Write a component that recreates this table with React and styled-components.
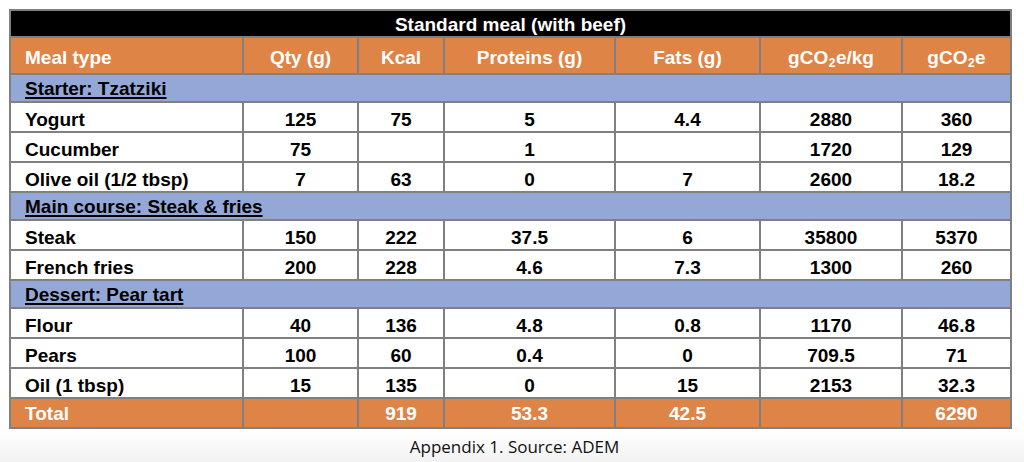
import React from 'react'
import styled, { createGlobalStyle } from 'styled-components'

const GlobalStyle = createGlobalStyle`
  html, body {
    margin: 0;
    padding: 0;
  }
  body {
    width: 1024px;
    height: 462px;
    overflow: hidden;
    background: linear-gradient(to bottom, #ffffff 0, #ffffff 430px, #f2f2f2 462px);
    font-family: "Liberation Sans", Arial, sans-serif;
  }
`

const sections = [
  {
    title: 'Starter: Tzatziki',
    rows: [
      ['Yogurt', '125', '75', '5', '4.4', '2880', '360'],
      ['Cucumber', '75', '', '1', '', '1720', '129'],
      ['Olive oil (1/2 tbsp)', '7', '63', '0', '7', '2600', '18.2'],
    ],
  },
  {
    title: 'Main course: Steak & fries',
    rows: [
      ['Steak', '150', '222', '37.5', '6', '35800', '5370'],
      ['French fries', '200', '228', '4.6', '7.3', '1300', '260'],
    ],
  },
  {
    title: 'Dessert: Pear tart',
    rows: [
      ['Flour', '40', '136', '4.8', '0.8', '1170', '46.8'],
      ['Pears', '100', '60', '0.4', '0', '709.5', '71'],
      ['Oil (1 tbsp)', '15', '135', '0', '15', '2153', '32.3'],
    ],
  },
]

const total = ['Total', '', '919', '53.3', '42.5', '', '6290']

const App = () => {
  return (
    <Page>
      <GlobalStyle />
      <Table>
        <TitleCell>Standard meal (with beef)</TitleCell>

        <HeadCell $first>Meal type</HeadCell>
        <HeadCell>Qty (g)</HeadCell>
        <HeadCell>Kcal</HeadCell>
        <HeadCell>Proteins (g)</HeadCell>
        <HeadCell>Fats (g)</HeadCell>
        <HeadCell><span>gCO<Sub>2</Sub>e/kg</span></HeadCell>
        <HeadCell><span>gCO<Sub>2</Sub>e</span></HeadCell>

        {sections.map((s) => (
          <React.Fragment key={s.title}>
            <SectionCell><span>{s.title}</span></SectionCell>
            {s.rows.map((r) =>
              r.map((v, i) => (
                <DataCell key={r[0] + i} $first={i === 0}>{v}</DataCell>
              ))
            )}
          </React.Fragment>
        ))}

        {total.map((v, i) => (
          <TotalCell key={'t' + i} $first={i === 0}>{v}</TotalCell>
        ))}
      </Table>
      <Caption>Appendix 1. Source: ADEM</Caption>
    </Page>
  )
}

const Page = styled.div`
  padding: 9px 0 0 9px;
`

const Table = styled.div`
  width: 1003px;
  box-sizing: border-box;
  display: grid;
  grid-template-columns: 231px 113px 84px 169px 143px 140px 107px;
  grid-template-rows: 25px 35px 26px 28px 28px 28px 26px 28px 28px 26px 28px 28px 28px 28px;
  gap: 2px;
  padding: 2px;
  background: #808080;
  font-weight: bold;
  font-size: 19px;
  color: #000;
`

const Cell = styled.div`
  display: flex;
  align-items: center;
  justify-content: ${(p) => (p.$first ? 'flex-start' : 'center')};
  padding-left: ${(p) => (p.$first ? '14px' : '0')};
  white-space: nowrap;
  line-height: 1;
`

const TitleCell = styled(Cell)`
  grid-column: 1 / -1;
  justify-content: center;
  background: #000;
  color: #fff;
  padding-top: 2px;
`

const HeadCell = styled(Cell)`
  background: #df8447;
  color: #fff;
  padding-top: 3px;
`

const Sub = styled.span`
  display: inline-block;
  font-size: 12px;
  transform: translateY(3px);
  margin: 0 0.5px;
`

const SectionCell = styled(Cell)`
  grid-column: 1 / -1;
  background: #94a8d7;
  padding-left: 14px;
  justify-content: flex-start;

  span {
    text-decoration: underline;
    text-decoration-thickness: 1.5px;
    text-underline-offset: 2px;
  }
`

const DataCell = styled(Cell)`
  background: #fff;
  padding-top: 4px;
`

const TotalCell = styled(Cell)`
  background: #df8447;
  color: #fff;
  padding-top: 1px;
`

const Caption = styled.div`
  width: 1003px;
  text-align: center;
  margin-top: 6px;
  font-family: "Open Sans", "Noto Sans", sans-serif;
  font-size: 17px;
  color: #111;
  padding-left: 4px;
`

export default App
